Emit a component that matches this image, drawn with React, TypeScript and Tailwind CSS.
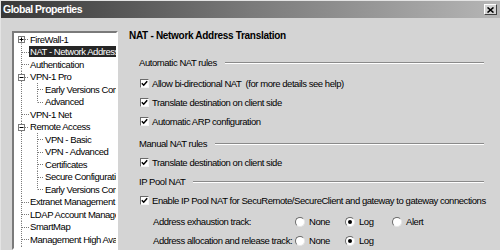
import React from "react";

type Item = { t: string; lvl: 0 | 1; box?: "+" | "-"; sel?: boolean; last?: boolean; first?: boolean };

const items: Item[] = [
  { t: "FireWall-1", lvl: 0, box: "+", first: true },
  { t: "NAT - Network Address Translation", lvl: 0, sel: true },
  { t: "Authentication", lvl: 0 },
  { t: "VPN-1 Pro", lvl: 0, box: "-" },
  { t: "Early Versions Compatibility", lvl: 1 },
  { t: "Advanced", lvl: 1, last: true },
  { t: "VPN-1 Net", lvl: 0 },
  { t: "Remote Access", lvl: 0, box: "-" },
  { t: "VPN - Basic", lvl: 1 },
  { t: "VPN - Advanced", lvl: 1 },
  { t: "Certificates", lvl: 1 },
  { t: "Secure Configuration Verification (SCV)", lvl: 1 },
  { t: "Early Versions Compatibility", lvl: 1, last: true },
  { t: "Extranet Management Interface", lvl: 0 },
  { t: "LDAP Account Management", lvl: 0 },
  { t: "SmartMap", lvl: 0 },
  { t: "Management High Availability", lvl: 0 },
  { t: "ConnectControl", lvl: 0 },
];

const dot = { stroke: "#7a7a7a", strokeWidth: 1, strokeDasharray: "1 1" };

function Connector({ it }: { it: Item }) {
  const w = it.lvl === 0 ? 15 : 30;
  const h = 12.5;
  const m = 6.5;
  return (
    <svg width={w} height={h} viewBox={`0 0 ${w} ${h}`} className="shrink-0">
      <line x1={7.5} y1={it.first ? m : 0} x2={7.5} y2={h} {...dot} />
      {it.lvl === 0 ? (
        <line x1={it.box ? 11 : 8} y1={m} x2={15} y2={m} {...dot} />
      ) : (
        <>
          <line x1={23.5} y1={0} x2={23.5} y2={it.last ? m : h} {...dot} />
          <line x1={24} y1={m} x2={30} y2={m} {...dot} />
        </>
      )}
      {it.box && (
        <g>
          <rect x={4.5} y={3.5} width={6} height={6} fill="#fff" stroke="#7a7a7a" strokeWidth={1} />
          <line x1={5.5} y1={m} x2={9.5} y2={m} stroke="#000" strokeWidth={1} />
          {it.box === "+" && <line x1={7.5} y1={4.5} x2={7.5} y2={8.5} stroke="#000" strokeWidth={1} />}
        </g>
      )}
    </svg>
  );
}

function Check() {
  return (
    <span className="w-[9px] h-[9px] shrink-0 bg-white border border-t-[#6a6a6a] border-l-[#6a6a6a] border-r-[#f4f4f4] border-b-[#f4f4f4] flex items-center justify-center">
      <svg width="7" height="7" viewBox="0 0 7 7">
        <path d="M0.8 3.2 L2.7 5.2 L6.2 1.2" fill="none" stroke="#000" strokeWidth="1.5" />
      </svg>
    </span>
  );
}

function Radio({ on }: { on?: boolean }) {
  return (
    <span className="w-[10px] h-[10px] shrink-0 rounded-full bg-white border border-t-[#6a6a6a] border-l-[#6a6a6a] border-r-[#e6e6e6] border-b-[#e6e6e6] flex items-center justify-center">
      {on && <span className="w-[4px] h-[4px] rounded-full bg-black" />}
    </span>
  );
}

function Section({ label }: { label: string }) {
  return (
    <div className="h-[14px] flex items-center pl-[21px] pr-[16px]">
      <span className="whitespace-nowrap">{label}</span>
      <div className="flex-1 ml-[8px] flex flex-col">
        <div className="h-px bg-[#8a8a8a]" />
        <div className="h-px bg-white" />
      </div>
    </div>
  );
}

function CheckRow({ label, mt }: { label: string; mt: string }) {
  return (
    <div className={`h-[19px] flex items-center pl-[22px] gap-[3px] whitespace-pre ${mt}`}>
      <Check />
      <span>{label}</span>
    </div>
  );
}

function RadioRow({ label, opts, sel }: { label: string; opts: string[]; sel: number }) {
  const widths = ["w-[50px]", "w-[47px]", "w-[50px]"];
  return (
    <div className="h-[19px] flex items-center pl-[35px] whitespace-nowrap">
      <span className="w-[142px]">{label}</span>
      {opts.map((o, i) => (
        <span key={o} className={`flex items-center gap-[4px] ${widths[i]}`}>
          <Radio on={i === sel} />
          <span>{o}</span>
        </span>
      ))}
    </div>
  );
}

export default function App() {
  return (
    <div className="w-[500px] h-[250px] overflow-hidden bg-[#d4d4d4] text-[9.5px] tracking-[-0.45px] leading-none text-black font-['Liberation_Sans',Arial,sans-serif] flex flex-col border-t border-l border-[#e4e4e4]">
      <div className="h-[17px] shrink-0 flex items-center justify-between pl-[2px] pr-[3px] bg-gradient-to-r from-[#383838] via-[#7a7a7a] to-[#b6b6b6]">
        <span className="text-white font-bold text-[10.5px] tracking-[-0.5px]">Global Properties</span>
        <span className="w-[13px] h-[11px] bg-[#d4d4d4] border border-t-white border-l-white border-r-[#404040] border-b-[#404040] flex items-center justify-center">
          <svg width="7" height="6" viewBox="0 0 7 6">
            <path d="M0.5 0.5 L6.5 5.5 M6.5 0.5 L0.5 5.5" stroke="#000" strokeWidth="1.6" />
          </svg>
        </span>
      </div>
      <div className="flex flex-1 min-h-0">
        <div className="ml-[11px] mt-[13px] w-[106px] shrink-0 bg-white border-2 border-t-[#7a7a7a] border-l-[#7a7a7a] border-r-white border-b-white overflow-hidden">
          {items.map((it, i) => (
            <div key={i} className="h-[12.5px] flex items-center whitespace-nowrap">
              <Connector it={it} />
              <span className={`px-[1px] h-[11px] flex items-center ${it.sel ? "bg-[#262626] text-white flex-1" : ""}`}>{it.t}</span>
            </div>
          ))}
        </div>
        <div className="flex-1 flex flex-col pt-[11px]">
          <div className="h-[14px] flex items-center pl-[11px] font-bold text-[10px] tracking-[-0.3px] whitespace-nowrap">
            NAT - Network Address Translation
          </div>
          <div className="mt-[13px]">
            <Section label="Automatic NAT rules" />
          </div>
          <CheckRow mt="mt-[4px]" label="Allow bi-directional NAT  (for more details see help)" />
          <CheckRow mt="" label="Translate destination on client side" />
          <CheckRow mt="" label="Automatic ARP configuration" />
          <div className="mt-[6px]">
            <Section label="Manual NAT rules" />
          </div>
          <CheckRow mt="mt-[2px]" label="Translate destination on client side" />
          <div className="mt-[3px]">
            <Section label="IP Pool NAT" />
          </div>
          <CheckRow mt="mt-[2px]" label="Enable IP Pool NAT for SecuRemote/SecureClient and gateway to gateway connections" />
          <div className="mt-[2px]">
            <RadioRow label="Address exhaustion track:" opts={["None", "Log", "Alert"]} sel={1} />
          </div>
          <RadioRow label="Address allocation and release track:" opts={["None", "Log"]} sel={1} />
        </div>
      </div>
    </div>
  );
}
